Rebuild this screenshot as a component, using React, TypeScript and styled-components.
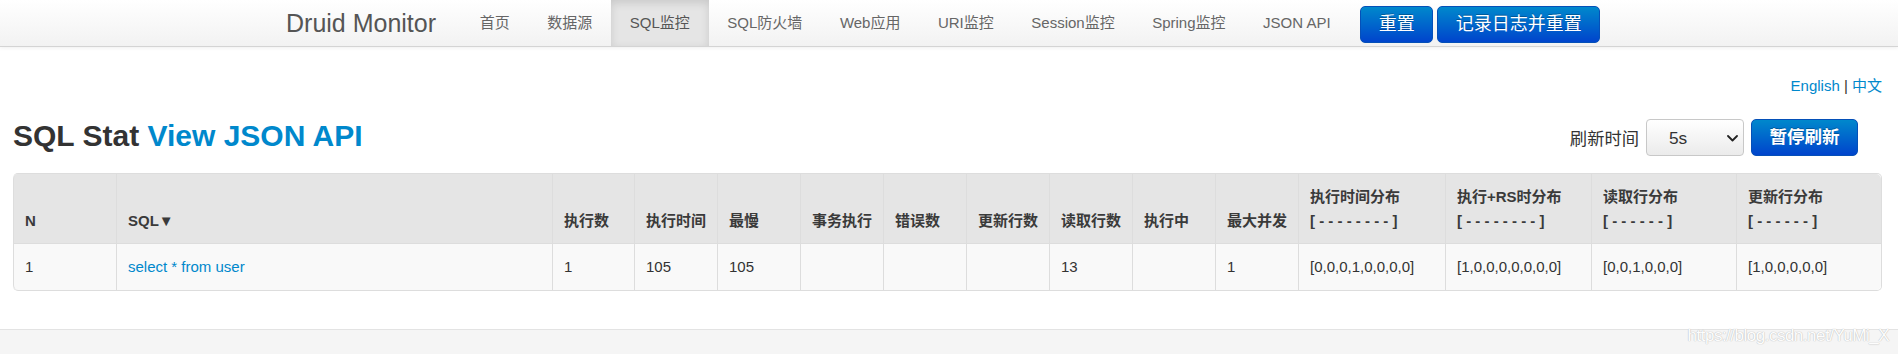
import React from 'react';
import styled, { createGlobalStyle } from 'styled-components';

const GlobalStyle = createGlobalStyle`
  html, body { margin: 0; padding: 0; background: #fff; }
  body {
    font-family: "Liberation Sans", Arial, "Noto Sans CJK SC", sans-serif;
    color: #333;
    overflow: hidden;
  }
  * { box-sizing: border-box; }
`;

const Navbar = styled.header`
  height: 47px;
  background: linear-gradient(to bottom, #ffffff, #f2f2f2);
  border-bottom: 1px solid #d4d4d4;
  box-shadow: 0 1px 4px rgba(0, 0, 0, 0.065);
`;

const NavInner = styled.div`
  width: 1350px;
  height: 46px;
  margin: 0 auto;
  padding-left: 12px;
  display: flex;
  align-items: stretch;
`;

const Brand = styled.a`
  font-size: 25px;
  line-height: 46px;
  color: #555;
  padding-right: 25px;
  text-decoration: none;
  white-space: nowrap;
`;

const NavList = styled.nav`
  display: flex;
  align-items: stretch;
`;

const NavItem = styled.a<{ $active?: boolean }>`
  display: block;
  padding: 0 18.75px;
  font-size: 15px;
  line-height: 46px;
  color: ${(p) => (p.$active ? '#555' : '#666')};
  text-decoration: none;
  white-space: nowrap;
  background: ${(p) => (p.$active ? '#e5e5e5' : 'transparent')};
  box-shadow: ${(p) => (p.$active ? 'inset 0 3px 8px rgba(0, 0, 0, 0.125)' : 'none')};
`;

const NavButtons = styled.div`
  display: flex;
  align-items: flex-start;
  gap: 4px;
  margin-left: 11px;
  padding-top: 6px;
`;

const PrimaryButton = styled.button<{ $bold?: boolean; $size?: number }>`
  height: 37px;
  padding: 0 17.5px;
  font-family: inherit;
  font-size: ${(p) => p.$size ?? 18}px;
  font-weight: ${(p) => (p.$bold ? 'bold' : 'normal')};
  color: #fff;
  line-height: 35px;
  white-space: nowrap;
  border: 1px solid #0550b8;
  border-radius: 5px;
  background: linear-gradient(to bottom, #0088cc, #0044cc);
  text-shadow: 0 -1px 0 rgba(0, 0, 0, 0.25);
  cursor: pointer;
`;

const Main = styled.main`
  padding: 0 16px 0 13px;
`;

const LangRow = styled.div`
  margin-top: 29px;
  text-align: right;
  font-size: 15px;
  line-height: 20px;
  color: #333;
`;

const Link = styled.a`
  color: #0088cc;
  text-decoration: none;
`;

const TitleRow = styled.div`
  display: flex;
  justify-content: space-between;
  align-items: flex-start;
  margin-top: 23px;
  height: 37px;
`;

const Title = styled.h3`
  margin: -2px 0 0;
  font-size: 30px;
  line-height: 37px;
  font-weight: bold;
  color: #333;
  white-space: nowrap;
`;

const RefreshGroup = styled.div`
  display: flex;
  align-items: center;
  gap: 7px;
  margin-right: 24px;
  height: 37px;
`;

const RefreshLabel = styled.span`
  font-size: 17.3px;
  color: #333;
`;

const SelectWrap = styled.div`
  position: relative;
  width: 98px;
  height: 37px;
`;

const Select = styled.select`
  appearance: none;
  -webkit-appearance: none;
  width: 100%;
  height: 100%;
  padding: 0 0 0 22px;
  font-family: inherit;
  font-size: 17.3px;
  color: #333;
  border: 1px solid #c8c8c8;
  border-radius: 4px;
  background: linear-gradient(to bottom, #ffffff, #ebebeb);
  outline: none;
`;

const Chevron = styled.svg`
  position: absolute;
  right: 6px;
  top: 50%;
  width: 11px;
  height: 7px;
  margin-top: -3px;
  pointer-events: none;
`;

const Table = styled.table`
  width: 100%;
  margin-top: 17px;
  table-layout: fixed;
  border-collapse: separate;
  border-spacing: 0;
  border: 1px solid #ddd;
  border-left: 0;
  border-radius: 5px;
  font-size: 15px;
`;

const HeadCell = styled.th<{ $w: number }>`
  width: ${(p) => p.$w}px;
  padding: 11px 11px 10px;
  line-height: 24px;
  text-align: left;
  vertical-align: bottom;
  font-weight: bold;
  color: #3a3a3a;
  background: #e5e5e5;
  border-left: 1px solid #ddd;
  white-space: nowrap;
  &:first-child { border-top-left-radius: 5px; }
  &:last-child { border-top-right-radius: 5px; }
`;

const BodyCell = styled.td`
  padding: 11px;
  line-height: 24px;
  color: #333;
  background: #f9f9f9;
  border-left: 1px solid #ddd;
  border-top: 1px solid #ddd;
  white-space: nowrap;
  &:first-child { border-bottom-left-radius: 5px; }
  &:last-child { border-bottom-right-radius: 5px; }
`;

const Footer = styled.footer`
  position: relative;
  margin-top: 38px;
  height: 25px;
  background: #f5f5f5;
  border-top: 1px solid #e3e3e3;
`;

const Watermark = styled.span`
  position: absolute;
  right: 9px;
  top: -3px;
  font-size: 17px;
  letter-spacing: -0.5px;
  line-height: 18px;
  color: #fdfdfd;
  text-shadow: 0 0 1px #b8b8b8, 0 0 1px #c8c8c8;
  white-space: nowrap;
`;

const navItems = ['首页', '数据源', 'SQL监控', 'SQL防火墙', 'Web应用', 'URI监控', 'Session监控', 'Spring监控', 'JSON API'];

type Col = { label: React.ReactNode; w: number };

const cols: Col[] = [
  { label: 'N', w: 103 },
  { label: 'SQL▼', w: 436 },
  { label: '执行数', w: 82 },
  { label: '执行时间', w: 83 },
  { label: '最慢', w: 83 },
  { label: '事务执行', w: 83 },
  { label: '错误数', w: 83 },
  { label: '更新行数', w: 83 },
  { label: '读取行数', w: 83 },
  { label: '执行中', w: 83 },
  { label: '最大并发', w: 83 },
  { label: <>执行时间分布<br />[ - - - - - - - - ]</>, w: 147 },
  { label: <>执行+RS时分布<br />[ - - - - - - - - ]</>, w: 146 },
  { label: <>读取行分布<br />[ - - - - - - ]</>, w: 145 },
  { label: <>更新行分布<br />[ - - - - - - ]</>, w: 145 },
];

const row: React.ReactNode[] = [
  '1',
  <Link href="#" key="sql">select * from user</Link>,
  '1',
  '105',
  '105',
  '',
  '',
  '',
  '13',
  '',
  '1',
  '[0,0,0,1,0,0,0,0]',
  '[1,0,0,0,0,0,0,0]',
  '[0,0,1,0,0,0]',
  '[1,0,0,0,0,0]',
];

export default function App() {
  return (
    <>
      <GlobalStyle />
      <Navbar>
        <NavInner>
          <Brand href="#">Druid Monitor</Brand>
          <NavList>
            {navItems.map((item) => (
              <NavItem href="#" key={item} $active={item === 'SQL监控'}>
                {item}
              </NavItem>
            ))}
          </NavList>
          <NavButtons>
            <PrimaryButton>重置</PrimaryButton>
            <PrimaryButton>记录日志并重置</PrimaryButton>
          </NavButtons>
        </NavInner>
      </Navbar>
      <Main>
        <LangRow>
          <Link href="#">English</Link> | <Link href="#">中文</Link>
        </LangRow>
        <TitleRow>
          <Title>
            SQL Stat <Link href="#">View JSON API</Link>
          </Title>
          <RefreshGroup>
            <RefreshLabel>刷新时间</RefreshLabel>
            <SelectWrap>
              <Select defaultValue="5s">
                <option value="5s">5s</option>
                <option value="10s">10s</option>
                <option value="20s">20s</option>
                <option value="30s">30s</option>
                <option value="1m">1m</option>
              </Select>
              <Chevron viewBox="0 0 11 7">
                <path d="M1 1l4.5 4.5L10 1" fill="none" stroke="#222" strokeWidth="1.8" strokeLinecap="round" strokeLinejoin="round" />
              </Chevron>
            </SelectWrap>
            <PrimaryButton $bold $size={17.5}>暂停刷新</PrimaryButton>
          </RefreshGroup>
        </TitleRow>
        <Table>
          <thead>
            <tr>
              {cols.map((c, i) => (
                <HeadCell key={i} $w={c.w}>
                  {c.label}
                </HeadCell>
              ))}
            </tr>
          </thead>
          <tbody>
            <tr>
              {row.map((v, i) => (
                <BodyCell key={i}>{v}</BodyCell>
              ))}
            </tr>
          </tbody>
        </Table>
      </Main>
      <Footer>
        <Watermark>https://blog.csdn.net/YuMi_X</Watermark>
      </Footer>
    </>
  );
}
